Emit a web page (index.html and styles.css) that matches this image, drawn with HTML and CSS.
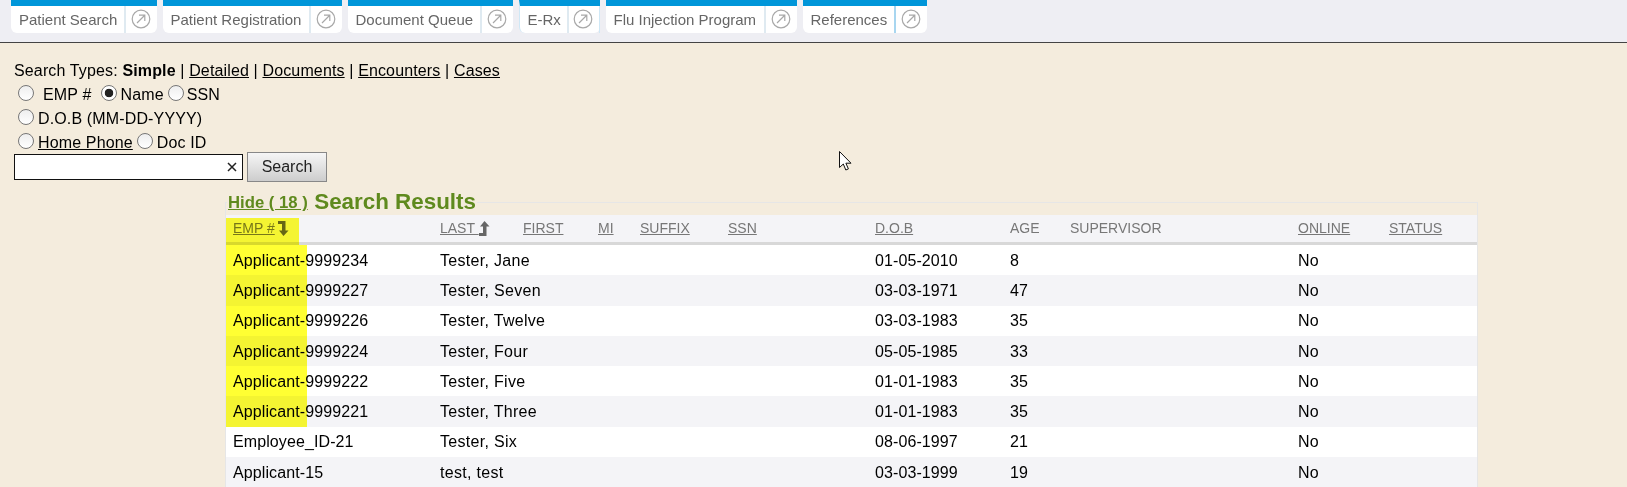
FILE: index.html

```html
<!DOCTYPE HTML>
<html>
<head>
    <meta http-equiv="Content-Type" content="text/html;charset=UTF-8">
    <title>Search</title>
    <link rel="stylesheet" href="styles.css">
</head>
<body>
<svg width="0" height="0" class="defs">
    <symbol id="go" viewBox="0 0 20 20">
        <circle cx="10" cy="10" r="8.8" fill="none" stroke="#a8a8a8" stroke-width="1.2"/>
        <path d="M6 14L13.5 6.5M8 6.2H13.8V12" fill="none" stroke="#a8a8a8" stroke-width="1.2"/>
    </symbol>
</svg>
<div class="topbar">
    <div class="tab t1"><span class="tab-name">Patient Search</span><span class="tab-go"><svg class="go"><use href="#go"/></svg></span></div>
    <div class="tab t2"><span class="tab-name">Patient Registration</span><span class="tab-go"><svg class="go"><use href="#go"/></svg></span></div>
    <div class="tab t3"><span class="tab-name">Document Queue</span><span class="tab-go"><svg class="go"><use href="#go"/></svg></span></div>
    <div class="tab t4"><span class="tab-name">E-Rx</span><span class="tab-go"><svg class="go"><use href="#go"/></svg></span></div>
    <div class="tab t5"><span class="tab-name">Flu Injection Program</span><span class="tab-go"><svg class="go"><use href="#go"/></svg></span></div>
    <div class="tab t6"><span class="tab-name">References</span><span class="tab-go"><svg class="go"><use href="#go"/></svg></span></div>
</div>

<div class="content">
    <div class="line">Search Types: <b>Simple</b> | <a href="#">Detailed</a> | <a href="#">Documents</a> | <a href="#">Encounters</a> | <a href="#">Cases</a></div>
    <div class="line radios">
        <input type="radio" name="t" class="first"><span class="emp">EMP #</span>
        <input type="radio" name="t" checked><span>Name</span>
        <input type="radio" name="t"><span>SSN</span>
    </div>
    <div class="line radios">
        <input type="radio" name="t" class="first"><span>D.O.B (MM-DD-YYYY)</span>
    </div>
    <div class="line radios">
        <input type="radio" name="t" class="first"><a href="#">Home Phone</a>
        <input type="radio" name="t"><span>Doc ID</span>
    </div>
    <div class="search-row">
        <div class="search-box"><input type="text"><svg class="clear" viewBox="0 0 10 10"><path d="M1 1L9 9M9 1L1 9"/></svg></div>
        <button class="search-btn">Search</button>
    </div>

    <fieldset class="results">
        <legend><a href="#" class="hide">Hide ( 18 )</a> <span class="legend-title">Search Results</span></legend>
        <table>
            <colgroup>
                <col class="c1"><col class="c2"><col class="c3"><col class="c4"><col class="c5"><col class="c6">
                <col class="c7"><col class="c8"><col class="c9"><col class="c10"><col class="c11">
            </colgroup>
            <thead>
                <tr>
                    <th><a href="#">EMP #</a><svg class="sort" viewBox="0 0 11 15"><path d="M0 0H7.5V9.5H10.5L5.5 15L1 9.5H4V3H0Z"/></svg></th>
                    <th><a href="#">LAST </a><svg class="sort sort-up" viewBox="0 0 11 15"><path d="M0 15H7.5V5.5H10.5L5.5 0L1 5.5H4V12H0Z"/></svg></th>
                    <th><a href="#">FIRST</a></th>
                    <th><a href="#">MI</a></th>
                    <th><a href="#">SUFFIX</a></th>
                    <th><a href="#">SSN</a></th>
                    <th><a href="#">D.O.B</a></th>
                    <th>AGE</th>
                    <th>SUPERVISOR</th>
                    <th><a href="#">ONLINE</a></th>
                    <th><a href="#">STATUS</a></th>
                </tr>
            </thead>
            <tbody>
                <tr><td>Applicant-9999234</td><td colspan="2" class="name">Tester, Jane</td><td></td><td></td><td></td><td>01-05-2010</td><td>8</td><td></td><td>No</td><td></td></tr>
                <tr><td>Applicant-9999227</td><td colspan="2" class="name">Tester, Seven</td><td></td><td></td><td></td><td>03-03-1971</td><td>47</td><td></td><td>No</td><td></td></tr>
                <tr><td>Applicant-9999226</td><td colspan="2" class="name">Tester, Twelve</td><td></td><td></td><td></td><td>03-03-1983</td><td>35</td><td></td><td>No</td><td></td></tr>
                <tr><td>Applicant-9999224</td><td colspan="2" class="name">Tester, Four</td><td></td><td></td><td></td><td>05-05-1985</td><td>33</td><td></td><td>No</td><td></td></tr>
                <tr><td>Applicant-9999222</td><td colspan="2" class="name">Tester, Five</td><td></td><td></td><td></td><td>01-01-1983</td><td>35</td><td></td><td>No</td><td></td></tr>
                <tr><td>Applicant-9999221</td><td colspan="2" class="name">Tester, Three</td><td></td><td></td><td></td><td>01-01-1983</td><td>35</td><td></td><td>No</td><td></td></tr>
                <tr><td>Employee_ID-21</td><td colspan="2" class="name">Tester, Six</td><td></td><td></td><td></td><td>08-06-1997</td><td>21</td><td></td><td>No</td><td></td></tr>
                <tr><td>Applicant-15</td><td colspan="2" class="name">test, test</td><td></td><td></td><td></td><td>03-03-1999</td><td>19</td><td></td><td>No</td><td></td></tr>
            </tbody>
        </table>
    </fieldset>
</div>

<div class="mark mark-head"></div>
<div class="mark mark-body"></div>
<svg class="cursor" viewBox="0 0 13 20"><path d="M.5.5V16.5L4.3 13L6.8 19L9.4 17.9L6.9 12.2H12Z" fill="#fff" stroke="#111"/></svg>
</body>
</html>
```

FILE: styles.css

```css
html, body {
    margin: 0;
    height: 487px;
    overflow: hidden;
}
body {
    position: relative;
    background: #f4ecdd;
    font: 16px "Liberation Sans", Arial, sans-serif;
    color: #000;
}
a {
    color: inherit;
}
.defs {
    position: absolute;
}

/* top tabs */
.topbar {
    display: flex;
    gap: 5.5px;
    height: 42px;
    padding-left: 11px;
    background: #eeeef3;
    border-bottom: 1px solid #444;
}
.tab {
    display: flex;
    height: 27px;
    border-top: 6px solid #0096d9;
    border-radius: 0 0 6px 6px;
    background: #fff;
    font-size: 15px;
    color: #666;
}
.t1 { width: 146px; }
.t2 { width: 179.5px; }
.t3 { width: 165.5px; }
.t4 { width: 80.5px; border-left: 1px solid #cfe8f6; }
.t5 { width: 191.5px; }
.t6 { width: 124.5px; }
.tab-name {
    flex: 1;
    padding: 4px 0 0 8px;
    line-height: 20px;
    white-space: nowrap;
}
.tab-go {
    display: flex;
    justify-content: center;
    box-sizing: border-box;
    padding: 3px 2px 0 0;
    width: 33px;
    border-left: 2px solid #dfeaf1;
}
.go {
    width: 20px;
    height: 20px;
}
.t4 .tab-go {
    border-right: 1px solid #cfe8f6;
}
.t6 .tab-go {
    border-left-color: #a8d6f0;
}

/* search form */
.content {
    padding: 16px 0 0 14px;
    letter-spacing: .14px;
}
.line {
    height: 24px;
    line-height: 24px;
}
.radios {
    display: flex;
    align-items: center;
}
.radios input {
    appearance: none;
    flex: none;
    width: 16px;
    height: 16px;
    margin: -4px 3px 0 0;
    border: 1px solid #777;
    border-radius: 50%;
    background: linear-gradient(#eee, #fff);
}
.radios input:checked {
    background: radial-gradient(circle, #222 0 4px, #fff 4.6px);
}
.radios .first {
    margin-left: 4px;
    margin-right: 4px;
}
.radios span + input {
    margin-left: 4px;
}
.radios a + input {
    margin-left: 4px;
    margin-right: 4px;
}
.radios .emp {
    margin: 0 6px 0 5px;
}
.search-row {
    display: flex;
    align-items: center;
    gap: 4px;
    height: 30px;
    margin-top: -3px;
}
.search-box {
    position: relative;
    width: 229px;
    height: 26px;
    box-sizing: border-box;
    border: 1px solid #111;
    background: #fff;
}
.search-box input {
    width: 200px;
    height: 22px;
    border: 0;
    padding: 0 4px;
    background: transparent;
}
.clear {
    position: absolute;
    right: 5px;
    top: 7px;
    width: 10px;
    height: 10px;
    fill: none;
    stroke: #222;
    stroke-width: 1.5;
}
.search-btn {
    width: 80px;
    height: 30px;
    padding: 0;
    border: 1px solid #888;
    background: linear-gradient(#f6f6f6, #cdcdcd);
    font: 16px "Liberation Sans", Arial, sans-serif;
    color: #222;
}

/* results */
.results {
    width: 1253px;
    box-sizing: border-box;
    margin: 7px 0 0 211px;
    padding: 0;
    border: 1px solid #e6e6e6;
    border-bottom: 0;
    letter-spacing: 0;
}
.results legend {
    margin-left: 1px;
    padding: 0 1px;
    color: #5f8a1e;
    white-space: nowrap;
}
.hide {
    position: relative;
    top: -1px;
    font-size: 16.7px;
    font-weight: bold;
}
.legend-title {
    margin-left: 2px;
    font-size: 22.4px;
    font-weight: bold;
}
table {
    width: 1251px;
    table-layout: fixed;
    border-collapse: collapse;
    background: #fff;
}
.c1 { width: 207px; }
.c2 { width: 83px; }
.c3 { width: 75px; }
.c4 { width: 42px; }
.c5 { width: 88px; }
.c6 { width: 147px; }
.c7 { width: 135px; }
.c8 { width: 60px; }
.c9 { width: 228px; }
.c10 { width: 91px; }
.c11 { width: 95px; }
th {
    height: 25px;
    padding: 0 7px 2px;
    border-bottom: 3px solid #d8d8d8;
    background: #f4f4f7;
    text-align: left;
    font-size: 14px;
    font-weight: normal;
    color: #777;
    white-space: nowrap;
}
.sort {
    width: 11px;
    height: 15px;
    margin: 0 0 -3px 3px;
    fill: #666;
}
.sort-up {
    margin-left: 0;
}
td {
    height: 29.3px;
    padding: 1px 7px 0;
    white-space: nowrap;
    letter-spacing: .1px;
}
td.name {
    letter-spacing: .3px;
}
tbody tr:nth-child(even) {
    background: #f4f4f7;
}

/* yellow marker laid over the id column */
.mark {
    position: absolute;
    left: 226px;
    background: #ffff33;
    mix-blend-mode: multiply;
}
.mark-head {
    top: 218px;
    width: 73px;
    height: 27px;
}
.mark-body {
    top: 245px;
    width: 81px;
    height: 182px;
}
.cursor {
    position: absolute;
    left: 839px;
    top: 151px;
    width: 13px;
    height: 20px;
}
```
